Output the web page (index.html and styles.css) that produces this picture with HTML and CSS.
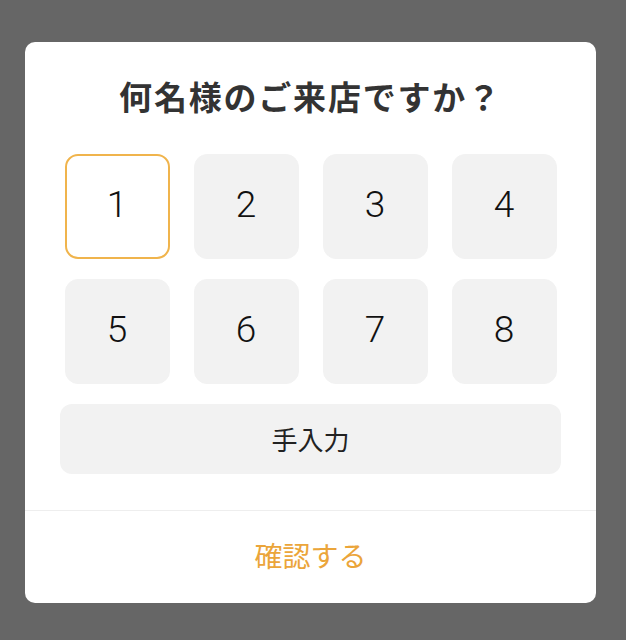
FILE: index.html
```html
<!DOCTYPE html>
<html lang="ja">
<head>
  <meta charset="UTF-8">
  <meta name="viewport" content="width=device-width, initial-scale=1.0">
  <title>人数選択</title>
  <link rel="stylesheet" href="styles.css">
</head>
<body>
  <div class="dialog">
    <div class="dialog-body">
      <h2 class="dialog-title">何名様のご来店ですか？</h2>
      <div class="num-grid">
        <button class="num-btn selected">1</button>
        <button class="num-btn">2</button>
        <button class="num-btn">3</button>
        <button class="num-btn">4</button>
        <button class="num-btn">5</button>
        <button class="num-btn">6</button>
        <button class="num-btn">7</button>
        <button class="num-btn">8</button>
      </div>
      <button class="manual-btn">手入力</button>
    </div>
    <div class="dialog-footer">
      <button class="confirm-btn">確認する</button>
    </div>
  </div>
</body>
</html>
```

FILE: styles.css
```css
body {
  margin: 0;
  background-color: #666666;
  font-family: "Noto Sans CJK JP", "Noto Sans", sans-serif;
  color: #333;
}

.dialog {
  width: 571px;
  height: 561px;
  margin: 42px 0 0 25px;
  background-color: #ffffff;
  border-radius: 10px;
  display: flex;
  flex-direction: column;
  overflow: hidden;
}

.dialog-body {
  padding: 32px 35px 0 35px;
}

.dialog-title {
  margin: 0;
  font-size: 33px;
  line-height: 44px;
  font-weight: bold;
  text-align: center;
  color: #333;
  letter-spacing: 1.8px;
}

.num-grid {
  display: grid;
  grid-template-columns: repeat(4, 105px);
  grid-auto-rows: 105px;
  column-gap: 24px;
  row-gap: 20px;
  justify-content: center;
  margin-top: 36px;
}

.num-btn {
  background-color: #f2f2f2;
  border: 1.5px solid #f2f2f2;
  border-radius: 13px;
  font-family: Roboto, "Noto Sans", sans-serif;
  font-size: 37px;
  font-weight: 300;
  color: #111;
  padding: 0 0 4px 0;
  cursor: pointer;
}

.num-btn.selected {
  background-color: #ffffff;
  border: 2px solid #f0b44c;
}

.manual-btn {
  display: block;
  width: 100%;
  height: 70px;
  margin-top: 20px;
  background-color: #f2f2f2;
  border: none;
  border-radius: 12px;
  font-family: inherit;
  font-size: 26px;
  color: #222;
  padding: 0 0 2px 0;
  cursor: pointer;
}

.dialog-footer {
  margin-top: 36px;
  border-top: 1px solid #eeeeee;
  flex: 1;
  display: flex;
  align-items: center;
  justify-content: center;
}

.confirm-btn {
  background: none;
  border: none;
  font-family: inherit;
  font-size: 28px;
  color: #eba53a;
  cursor: pointer;
  padding: 0 0 4px 0;
}
```
